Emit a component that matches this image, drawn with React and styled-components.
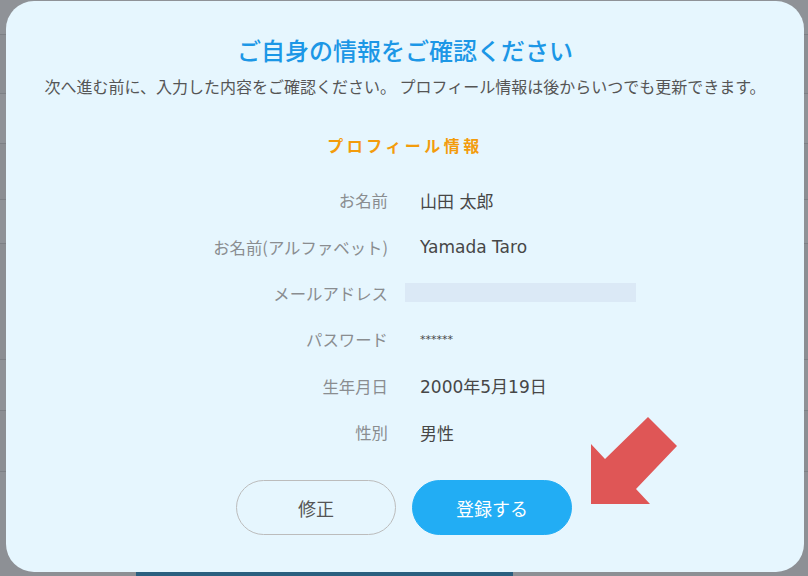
import React from 'react';
import styled, { createGlobalStyle } from 'styled-components';

const GlobalStyle = createGlobalStyle`
  html, body {
    margin: 0;
    padding: 0;
    background: #8d9095;
  }
  body {
    font-family: 'Noto Sans CJK JP', 'Noto Sans', sans-serif;
  }
`;

const Screen = styled.div`
  position: relative;
  width: 808px;
  height: 576px;
  overflow: hidden;
  background: #8d9095;
`;

const BackPage = styled.div`
  display: flex;
  flex-direction: column;
  height: 100%;
`;

const BackRow = styled.div`
  height: ${p => p.h}px;
  border-bottom: 1px solid #7d8085;
  background: ${p => p.shade};
`;

const BackFooter = styled.div`
  margin-top: auto;
  margin-left: 136px;
  width: 377px;
  height: 5px;
  background: #2b5f7f;
`;

const Modal = styled.div`
  position: absolute;
  left: 6px;
  top: 1px;
  width: 798px;
  height: 571px;
  box-sizing: border-box;
  border-radius: 28px;
  background: #e6f6fe;
  display: flex;
  flex-direction: column;
  align-items: center;
  padding-top: 32px;
`;

const Title = styled.h1`
  margin: 0;
  font-size: 24px;
  line-height: 34px;
  font-weight: 500;
  color: #1c97e6;
`;

const Lead = styled.p`
  margin: 7px 0 0;
  font-size: 16px;
  line-height: 24px;
  color: #555;
  white-space: nowrap;
`;

const Section = styled.h2`
  margin: 35px 0 0;
  font-size: 16px;
  line-height: 24px;
  font-weight: 700;
  letter-spacing: 3.5px;
  color: #f39c0c;
`;

const Table = styled.div`
  margin-top: 20px;
  width: 100%;
  display: grid;
  grid-template-columns: 1fr 1fr;
  column-gap: 32px;
  padding-right: 2px;
  box-sizing: border-box;
`;

const Label = styled.div`
  height: 46.4px;
  display: flex;
  align-items: center;
  justify-content: flex-end;
  font-size: 16.4px;
  color: #8a8d90;
`;

const Value = styled.div`
  height: 46.4px;
  display: flex;
  align-items: center;
  font-family: 'DejaVu Sans', 'Noto Sans CJK JP', sans-serif;
  font-size: ${p => (p.small ? '11px' : '17px')};
  color: #474747;
`;

const Hidden = styled.div`
  width: 231px;
  height: 19px;
  margin-left: -15px;
  background: #dbe9f6;
`;

const Actions = styled.div`
  margin-top: 25px;
  display: flex;
  gap: 16px;
  align-items: center;
  padding-right: 2px;
`;

const Button = styled.button`
  width: 160px;
  height: 55px;
  border-radius: 28px;
  font-family: inherit;
  font-size: 18px;
  cursor: pointer;
  border: 1px solid ${p => (p.primary ? '#22adf4' : '#bcbcbc')};
  background: ${p => (p.primary ? '#22adf4' : 'transparent')};
  color: ${p => (p.primary ? '#fff' : '#555')};
`;

const Arrow = styled.svg`
  position: absolute;
  left: 0;
  top: 0;
  pointer-events: none;
`;

const rows = [
  ['お名前', '山田 太郎'],
  ['お名前(アルファベット)', 'Yamada Taro'],
  ['メールアドレス', null],
  ['パスワード', '******'],
  ['生年月日', '2000年5月19日'],
  ['性別', '男性'],
];

const backRows = [
  [34, '#8f9297'], [58, '#8b8e93'], [49, '#8f9297'], [55, '#8b8e93'],
  [43, '#8f9297'], [115, '#8b8e93'], [50, '#8f9297'], [60, '#8b8e93'],
];

export default function App() {
  return (
    <>
      <GlobalStyle />
      <Screen>
        <BackPage>
          {backRows.map(([h, shade], i) => (
            <BackRow key={`back_${i}`} h={h} shade={shade} />
          ))}
          <BackFooter />
        </BackPage>
        <Modal>
          <Title>ご自身の情報をご確認ください</Title>
          <Lead>次へ進む前に、入力した内容をご確認ください。 プロフィール情報は後からいつでも更新できます。</Lead>
          <Section>プロフィール情報</Section>
          <Table>
            {rows.map(([label, value]) => (
              <React.Fragment key={label}>
                <Label>{label}</Label>
                <Value small={value === '******'}>
                  {value === null ? <Hidden /> : value}
                </Value>
              </React.Fragment>
            ))}
          </Table>
          <Actions>
            <Button>修正</Button>
            <Button primary>登録する</Button>
          </Actions>
        </Modal>
        <Arrow width="808" height="576" viewBox="0 0 808 576">
          <polygon
            points="591,444 605,459 648,417 677,446 636,489 650,504 591,504"
            fill="#df5656"
          />
        </Arrow>
      </Screen>
    </>
  );
}
